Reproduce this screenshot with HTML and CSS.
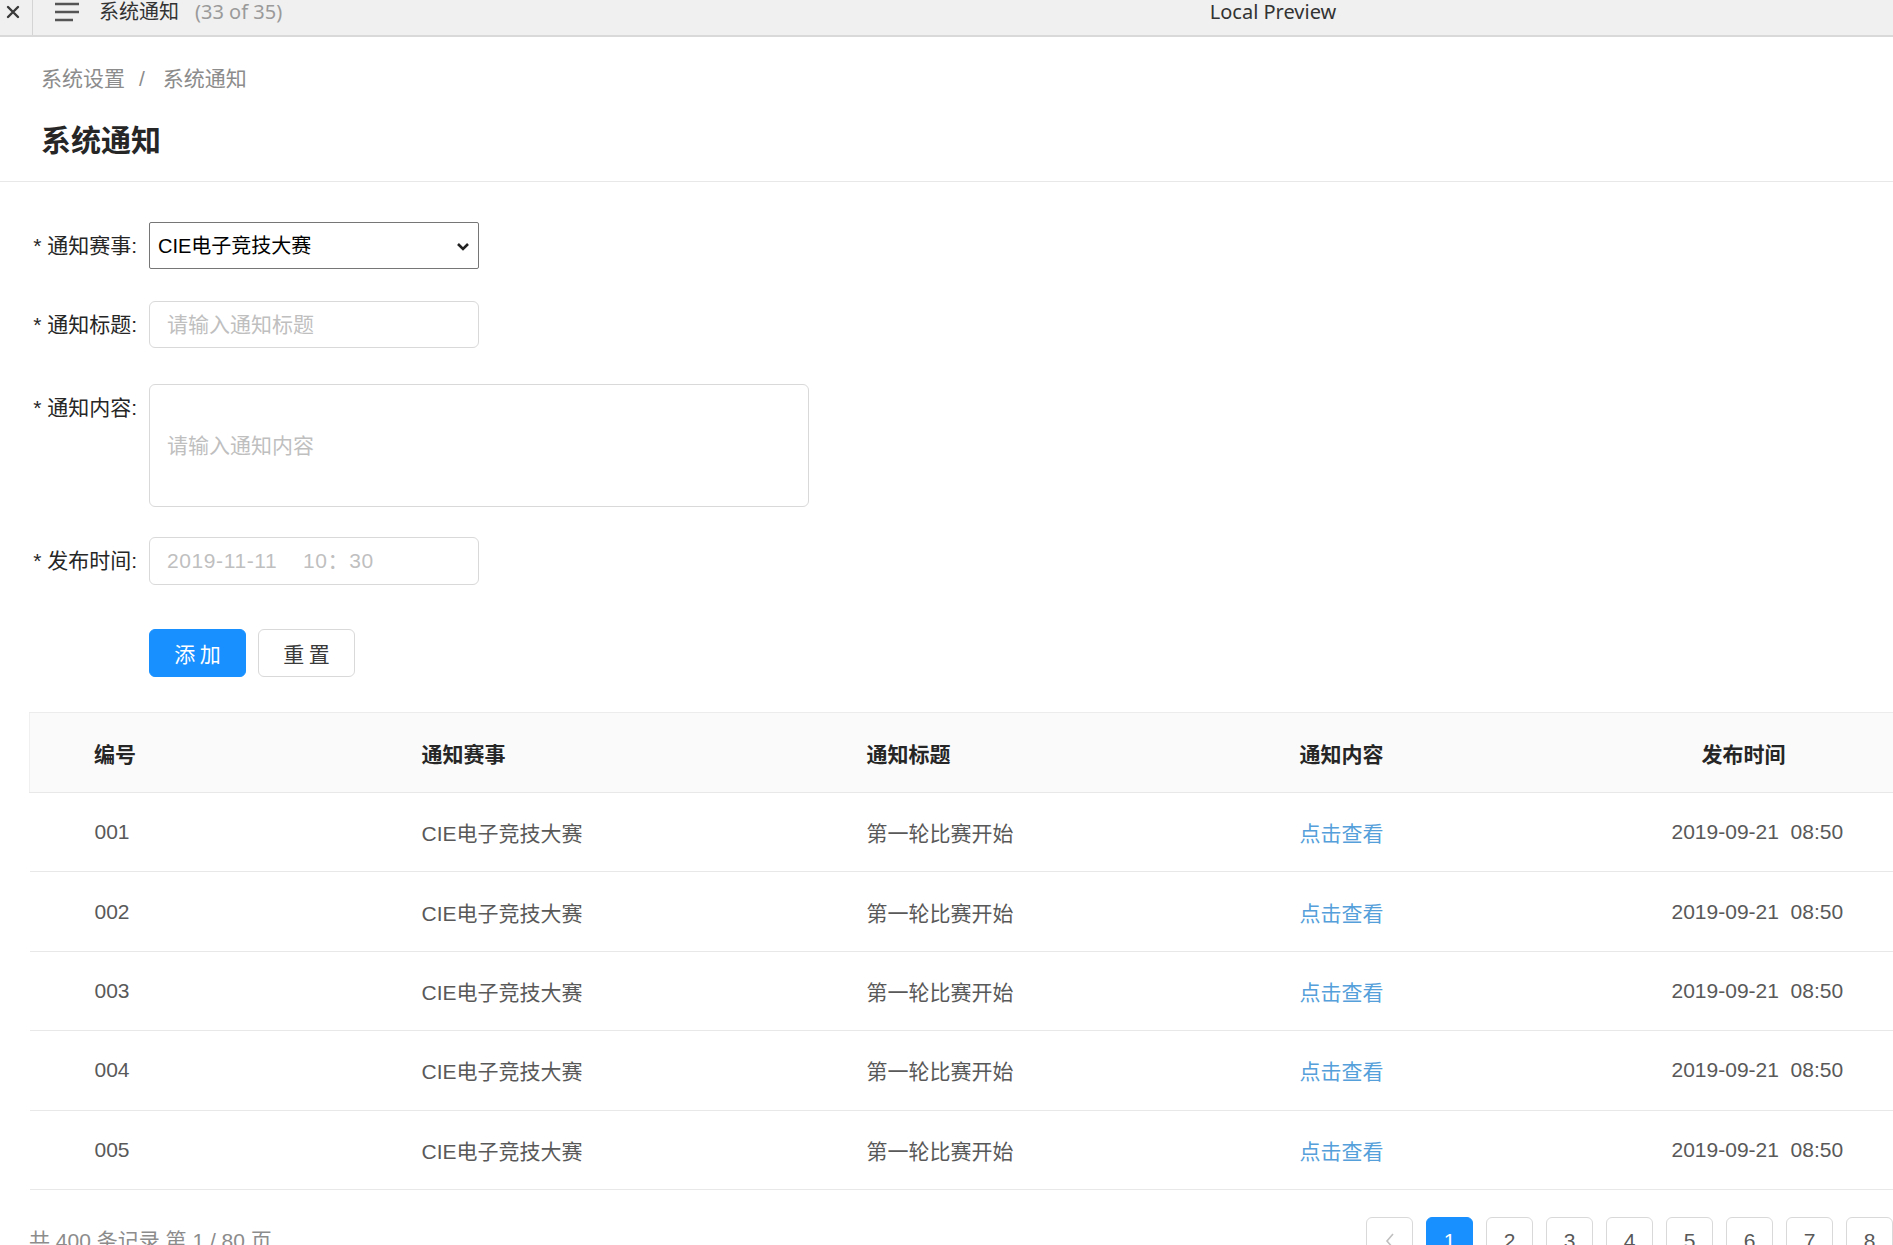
FILE: index.html
```html
<!DOCTYPE html>
<html lang="zh-CN">
<head>
<meta charset="utf-8">
<title>系统通知</title>
<link rel="stylesheet" href="styles.css">
</head>
<body>
<div class="titlebar">
  <div class="tb-left">
    <div class="tb-close">
      <svg width="14" height="14" viewBox="0 0 14 14"><path d="M2 2 L12 12 M12 2 L2 12" stroke="#3a3a3a" stroke-width="2.4" stroke-linecap="round"/></svg>
    </div>
    <div class="tb-menu">
      <svg width="26" height="22" viewBox="0 0 26 22"><path d="M1 3 H25 M1 11 H25 M1 19 H19" stroke="#555" stroke-width="2.6"/></svg>
    </div>
    <span class="tb-name">系统通知</span>
    <span class="tb-count">(33 of 35)</span>
  </div>
  <div class="tb-center">Local Preview</div>
  <div class="tb-right"></div>
</div>

<div class="page">
  <div class="page-header">
    <div class="breadcrumb">
      <span class="crumb">系统设置</span><span class="sep">/</span><span class="crumb">系统通知</span>
    </div>
    <h1 class="page-title">系统通知</h1>
  </div>

  <div class="main">
    <form class="form">
      <div class="form-row row-1">
        <label class="form-label">* 通知赛事:</label>
        <div class="select-wrap">
          <select class="select">
            <option>CIE电子竞技大赛</option>
          </select>
          <svg class="chevron" width="14" height="9" viewBox="0 0 14 9"><path d="M2 2 L7 7 L12 2" fill="none" stroke="#222" stroke-width="2.6"/></svg>
        </div>
      </div>
      <div class="form-row row-2">
        <label class="form-label">* 通知标题:</label>
        <input class="input" type="text" placeholder="请输入通知标题">
      </div>
      <div class="form-row row-3">
        <label class="form-label">* 通知内容:</label>
        <textarea class="textarea" placeholder="请输入通知内容"></textarea>
      </div>
      <div class="form-row row-4">
        <label class="form-label">* 发布时间:</label>
        <input class="input input-date" type="text" placeholder="2019-11-11    10：30">
      </div>
      <div class="form-row row-5">
        <span class="form-label"></span>
        <div class="btns">
          <button type="button" class="btn btn-primary">添 加</button>
          <button type="button" class="btn">重 置</button>
        </div>
      </div>
    </form>

    <table class="table">
      <colgroup>
        <col class="c1"><col class="c2"><col class="c3"><col class="c4"><col class="c5">
      </colgroup>
      <thead>
        <tr><th>编号</th><th>通知赛事</th><th>通知标题</th><th>通知内容</th><th class="th-time">发布时间</th></tr>
      </thead>
      <tbody>
        <tr><td>001</td><td>CIE电子竞技大赛</td><td>第一轮比赛开始</td><td><a class="link">点击查看</a></td><td class="td-time">2019-09-21&nbsp;&nbsp;08:50</td></tr>
        <tr><td>002</td><td>CIE电子竞技大赛</td><td>第一轮比赛开始</td><td><a class="link">点击查看</a></td><td class="td-time">2019-09-21&nbsp;&nbsp;08:50</td></tr>
        <tr><td>003</td><td>CIE电子竞技大赛</td><td>第一轮比赛开始</td><td><a class="link">点击查看</a></td><td class="td-time">2019-09-21&nbsp;&nbsp;08:50</td></tr>
        <tr><td>004</td><td>CIE电子竞技大赛</td><td>第一轮比赛开始</td><td><a class="link">点击查看</a></td><td class="td-time">2019-09-21&nbsp;&nbsp;08:50</td></tr>
        <tr><td>005</td><td>CIE电子竞技大赛</td><td>第一轮比赛开始</td><td><a class="link">点击查看</a></td><td class="td-time">2019-09-21&nbsp;&nbsp;08:50</td></tr>
      </tbody>
    </table>

    <div class="pager">
      <div class="pager-total">共 400 条记录 第 1 / 80 页</div>
      <ul class="pager-list">
        <li class="pg pg-prev"><svg width="12" height="18" viewBox="0 0 12 18"><path d="M9 2 L3 9 L9 16" fill="none" stroke="#bfbfbf" stroke-width="1.6"/></svg></li>
        <li class="pg pg-active">1</li>
        <li class="pg">2</li>
        <li class="pg">3</li>
        <li class="pg">4</li>
        <li class="pg">5</li>
        <li class="pg">6</li>
        <li class="pg">7</li>
        <li class="pg">8</li>
        <li class="pg pg-more">•••</li>
        <li class="pg">80</li>
        <li class="pg"><svg width="12" height="18" viewBox="0 0 12 18"><path d="M3 2 L9 9 L3 16" fill="none" stroke="#595959" stroke-width="1.6"/></svg></li>
      </ul>
    </div>
  </div>
</div>
</body>
</html>
```

FILE: styles.css
```css
html, body {
  margin: 0;
  padding: 0;
  background: #fff;
  overflow: hidden;
}
body {
  font-family: "Liberation Sans", "Noto Sans CJK SC", sans-serif;
  color: #262626;
  width: 2546px;
}

/* title bar */
.titlebar {
  display: grid;
  grid-template-columns: 1fr auto 1fr;
  align-items: center;
  height: 35px;
  background: #f0f0f0;
  border-bottom: 2px solid #d9d9d9;
  font-family: "Noto Sans", "Noto Sans CJK SC", sans-serif;
  font-size: 20px;
}
.tb-left {
  display: flex;
  align-items: center;
  height: 100%;
}
.tb-close {
  width: 33px;
  height: 100%;
  display: flex;
  align-items: flex-start;
  padding-top: 5px;
  padding-left: 6px;
  box-sizing: border-box;
  border-right: 1px solid #d4d4d4;
}
.tb-menu {
  margin-left: 21px;
  height: 100%;
  display: flex;
  align-items: flex-start;
  padding-top: 1px;
  box-sizing: border-box;
}
.tb-name {
  margin-left: 19px;
  color: #333;
  line-height: 22px;
  margin-top: -12px;
}
.tb-count {
  margin-left: 16px;
  color: #9a9a9a;
  line-height: 22px;
  margin-top: -12px;
}
.tb-center {
  color: #333;
  line-height: 22px;
  margin-top: -12px;
}

/* page header */
.page {
  width: 2102px;
}
.page-header {
  padding: 24px 0 22px 41px;
  border-bottom: 1px solid #e8e8e8;
}
.breadcrumb {
  font-size: 21px;
  line-height: 32px;
  color: #8c8c8c;
  font-family: "Noto Sans CJK SC", sans-serif;
}
.sep {
  margin: 0 18px 0 14px;
  font-family: "Liberation Sans", sans-serif;
}
.page-title {
  margin: 22px 0 0 0;
  font-size: 30px;
  line-height: 42px;
  font-weight: 700;
  color: #262626;
  font-family: "Noto Sans CJK SC", sans-serif;
}

/* main */
.main {
  padding: 0 29px;
}
.form {
  padding-top: 40px;
}
.form-row {
  display: flex;
  align-items: flex-start;
}
.row-1 { margin-bottom: 32px; }
.row-2 { margin-bottom: 36px; }
.row-3 { margin-bottom: 30px; }
.row-4 { margin-bottom: 44px; }
.row-5 { margin-bottom: 35px; }

.form-label {
  width: 108px;
  flex: none;
  margin-right: 12px;
  text-align: right;
  white-space: nowrap;
  font-size: 21px;
  line-height: 47px;
  color: #262626;
}

.select-wrap {
  position: relative;
  width: 330px;
  height: 47px;
}
.select {
  appearance: none;
  -webkit-appearance: none;
  width: 100%;
  height: 100%;
  box-sizing: border-box;
  border: 1px solid #767676;
  border-radius: 2px;
  background: #fff;
  padding: 0 0 0 8px;
  font-family: "Liberation Sans", "Noto Sans CJK SC", sans-serif;
  font-size: 20px;
  color: #000;
  outline: none;
}
.chevron {
  position: absolute;
  right: 9px;
  top: 20px;
  pointer-events: none;
}

.input, .textarea {
  box-sizing: border-box;
  border: 1px solid #d9d9d9;
  border-radius: 6px;
  background: #fff;
  font-family: "Liberation Sans", "Noto Sans CJK SC", sans-serif;
  font-size: 21px;
  color: #262626;
  outline: none;
  margin: 0;
}
.input {
  width: 330px;
  height: 47px;
  padding: 0 17px;
}
.input-date {
  height: 48px;
  letter-spacing: 0.6px;
}
.textarea {
  width: 660px;
  height: 123px;
  padding: 45px 17px 0;
  line-height: 32px;
  resize: none;
  display: block;
}
.input::placeholder, .textarea::placeholder {
  color: #bfbfbf;
}

.btns {
  display: flex;
  gap: 12px;
}
.btn {
  width: 97px;
  height: 48px;
  box-sizing: border-box;
  border: 1px solid #d9d9d9;
  border-radius: 6px;
  background: #fff;
  color: #3a3a3a;
  font-family: "Noto Sans CJK SC", sans-serif;
  font-size: 21px;
  padding: 0;
  margin: 0;
}
.btn-primary {
  background: #1890ff;
  border-color: #1890ff;
  color: #fff;
}

/* table */
.table {
  width: 2044px;
  table-layout: fixed;
  border-collapse: collapse;
  font-size: 21px;
}
.c1 { width: 327px; }
.c2 { width: 445px; }
.c3 { width: 433px; }
.c4 { width: 372px; }
.c5 { width: 467px; }
.table th {
  height: 80px;
  box-sizing: border-box;
  background: #fafafa;
  border-top: 1px solid #ececec;
  border-bottom: 1px solid #e8e8e8;
  text-align: left;
  padding: 0 0 0 65px;
  font-weight: 700;
  color: #262626;
  font-family: "Noto Sans CJK SC", sans-serif;
}
.table th:first-child {
  border-left: 1px solid #f0f0f0;
  padding-left: 64px;
}
.table .th-time {
  padding-left: 95px;
}
.table td {
  height: 79.4px;
  box-sizing: border-box;
  border-bottom: 1px solid #e8e8e8;
  padding: 0 0 0 65px;
  color: #595959;
  white-space: nowrap;
}
.link {
  color: #55a0da;
  font-family: "Noto Sans CJK SC", sans-serif;
}

/* pagination */
.pager {
  display: flex;
  align-items: center;
  margin-top: 27px;
}
.pager-total {
  font-size: 21px;
  line-height: 32px;
  color: #8c8c8c;
}
.pager-list {
  margin: 0 0 0 auto;
  padding: 0;
  list-style: none;
  display: flex;
  gap: 13px;
}
.pg {
  width: 47px;
  height: 48px;
  box-sizing: border-box;
  border: 1px solid #d9d9d9;
  border-radius: 6px;
  display: flex;
  align-items: center;
  justify-content: center;
  font-size: 21px;
  color: #595959;
  background: #fff;
}
.pg-active {
  background: #1890ff;
  border-color: #1890ff;
  color: #fff;
}
.pg-more {
  border-color: transparent;
  color: #bfbfbf;
  font-size: 14px;
}
```
